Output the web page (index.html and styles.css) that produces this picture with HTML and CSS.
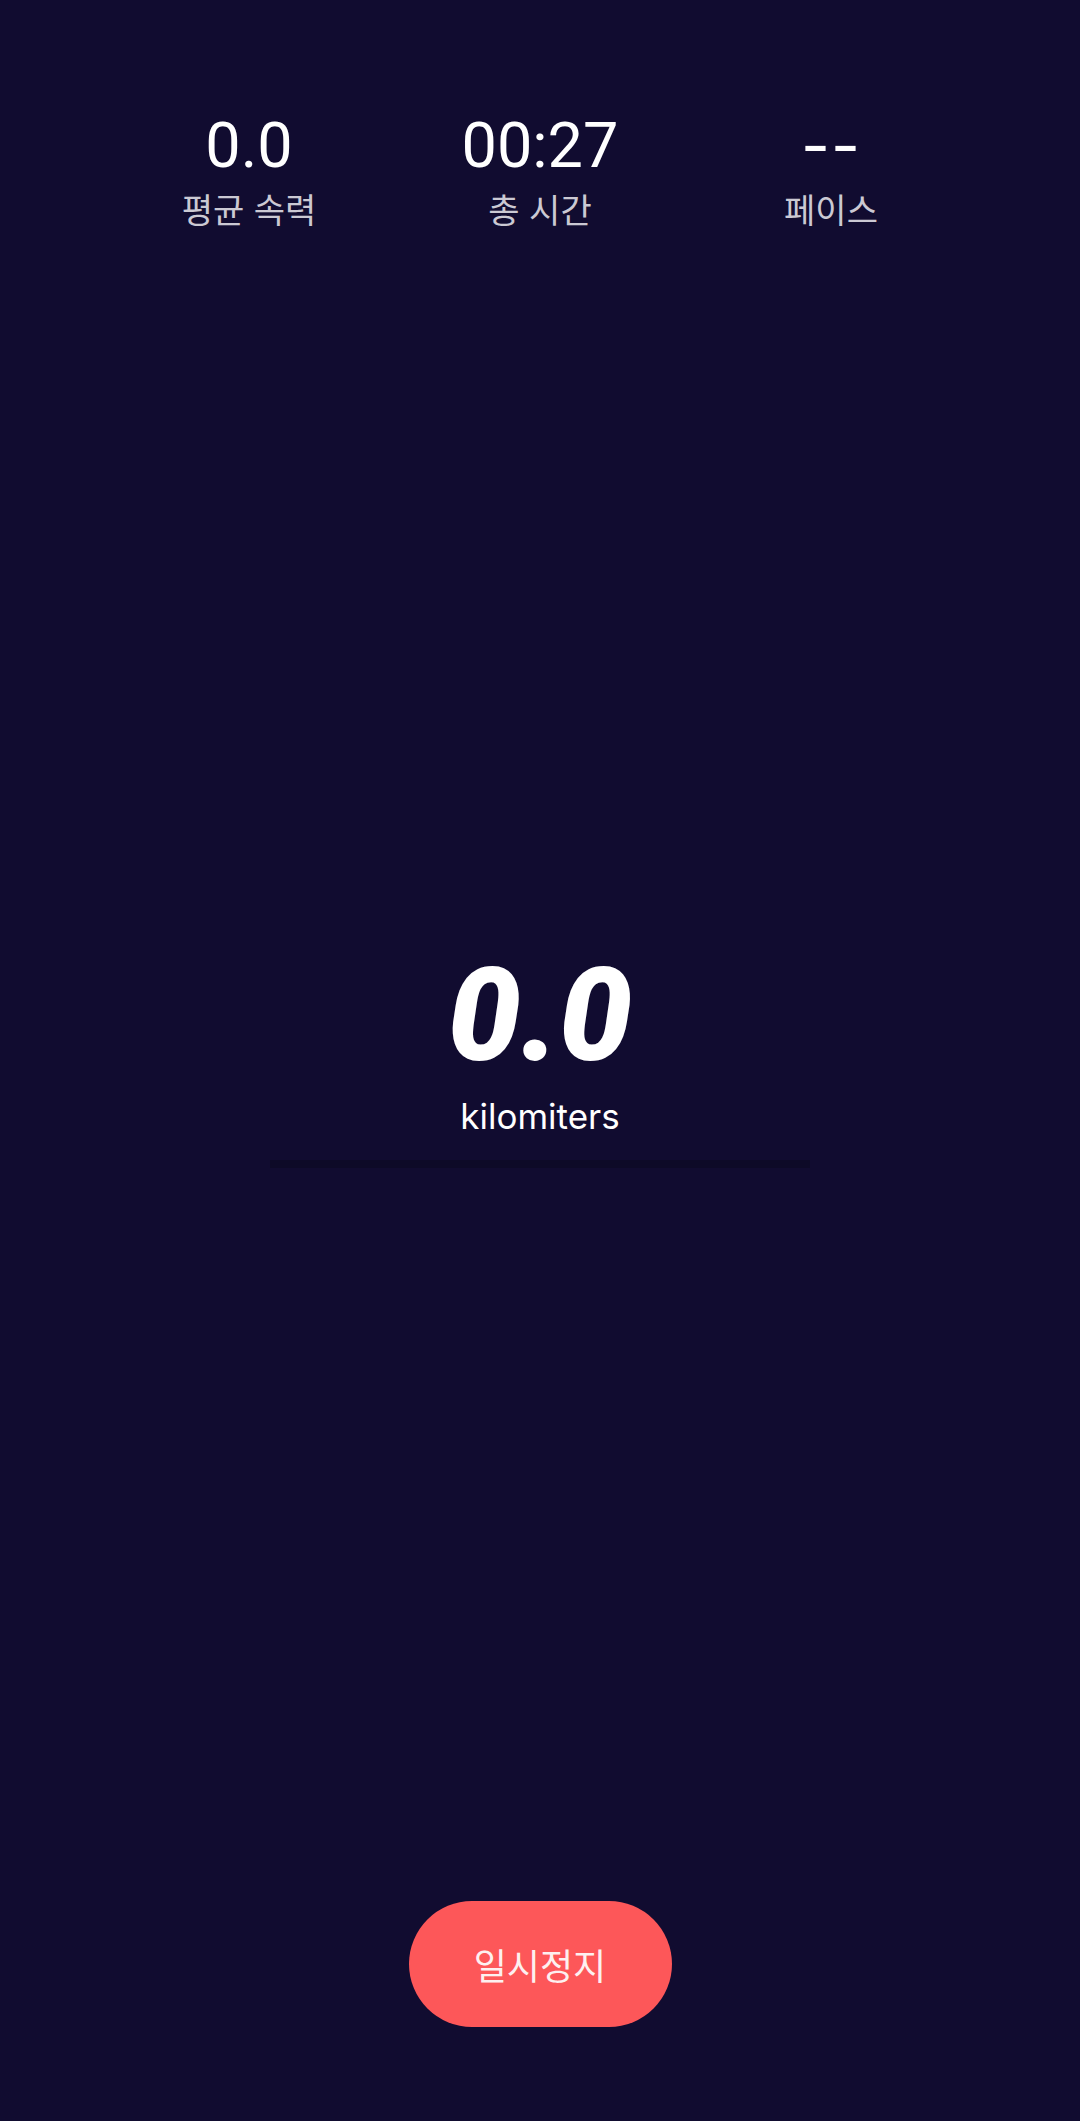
FILE: index.html
```html
<!DOCTYPE html>
<html lang="ko">
<head>
<meta charset="utf-8">
<link rel="stylesheet" href="styles.css">
</head>
<body>
<div class="screen">
  <div class="stats">
    <div class="stat">
      <div class="stat-value">0.0</div>
      <div class="stat-label">평균 속력</div>
    </div>
    <div class="stat">
      <div class="stat-value">00:27</div>
      <div class="stat-label">총 시간</div>
    </div>
    <div class="stat">
      <div class="stat-value stat-value-empty">--</div>
      <div class="stat-label">페이스</div>
    </div>
  </div>
  <div class="distance">
    <div class="distance-value">0.0</div>
    <div class="distance-unit">kilomiters</div>
    <div class="progress"></div>
  </div>
  <div class="actions">
    <button class="pause">일시정지</button>
  </div>
</div>
</body>
</html>
```
FILE: styles.css
```css
html, body {
  margin: 0;
  padding: 0;
  background: #110c30;
}
.screen {
  width: 1080px;
  height: 2121px;
  display: flex;
  flex-direction: column;
  align-items: center;
  overflow: hidden;
}
.stats {
  padding-top: 114px;
  display: grid;
  grid-template-columns: repeat(3, 291px);
}
.stat {
  display: flex;
  flex-direction: column;
  align-items: center;
  gap: 15px;
}
.stat-value {
  font-family: Roboto, "Noto Sans", sans-serif;
  font-size: 63px;
  line-height: 1;
  height: 63px;
  color: #ffffff;
}
.stat-value-empty {
  font-family: Inter, sans-serif;
  letter-spacing: 1px;
}
.stat-label {
  font-family: "Noto Sans CJK KR", sans-serif;
  font-size: 34px;
  line-height: 1;
  color: #cbc9d3;
}
.distance {
  margin-top: 725px;
  display: flex;
  flex-direction: column;
  align-items: center;
}
.distance-value {
  font-family: Roboto, sans-serif;
  font-weight: 900;
  font-style: italic;
  font-size: 130px;
  line-height: 1;
  color: #ffffff;
}
.distance-unit {
  margin-top: 18px;
  font-family: Inter, sans-serif;
  font-size: 35px;
  line-height: 1;
  color: #ffffff;
}
.progress {
  margin-top: 26px;
  width: 540px;
  height: 8px;
  background: #0d0a27;
}
.actions {
  margin-top: 733px;
}
.pause {
  width: 263px;
  height: 126px;
  border: none;
  border-radius: 63px;
  background: #fd5759;
  color: #fdf0f0;
  font-family: "Noto Sans CJK KR", sans-serif;
  font-size: 36px;
  padding: 0;
}
```
